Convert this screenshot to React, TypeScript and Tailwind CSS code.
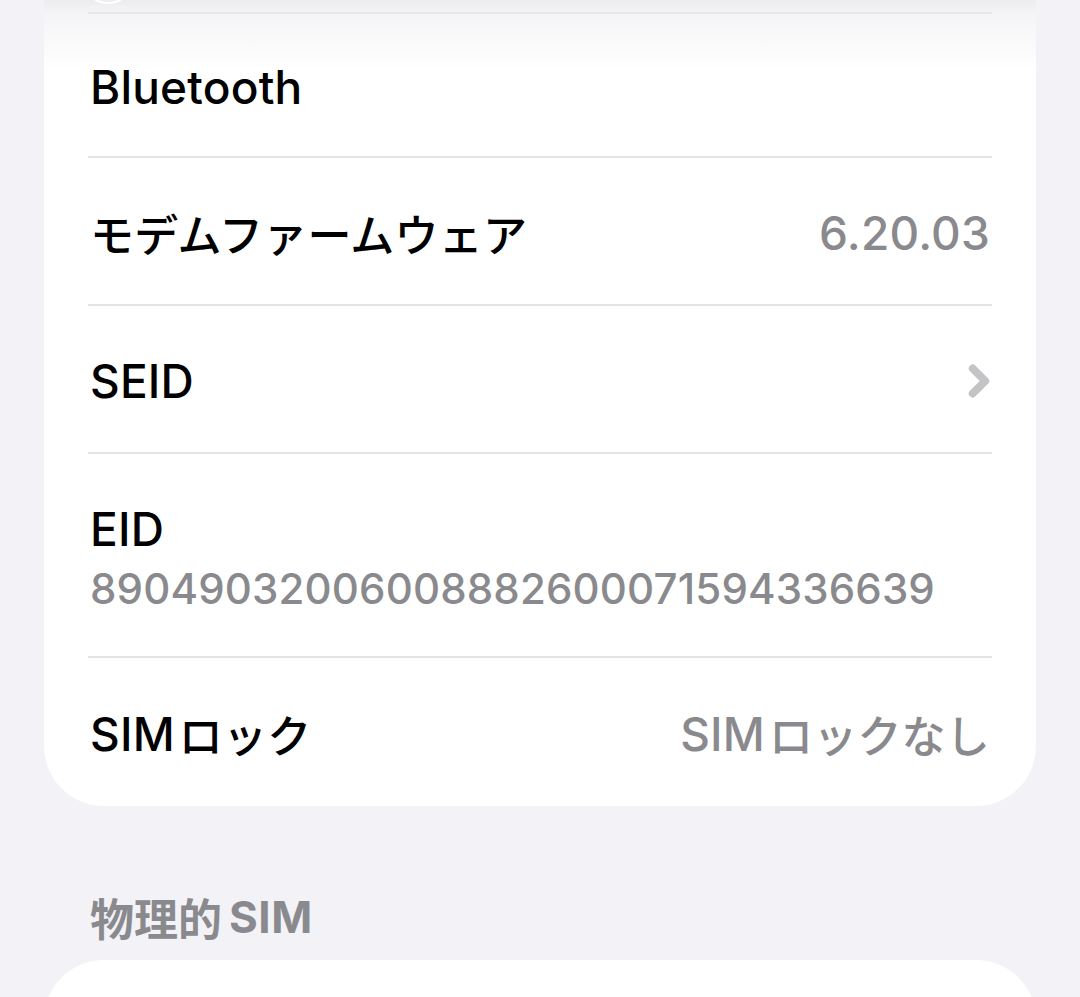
import { ChevronRight } from 'lucide-react'

const font = "font-['Inter','Noto_Sans_CJK_JP',sans-serif]"
const jp = "text-[44px] font-['Noto_Sans_CJK_JP',sans-serif]"

function Row({ label, value, chevron, last }: { label: React.ReactNode; value?: React.ReactNode; chevron?: boolean; last?: boolean }) {
    return (
        <div className="px-[44px]">
            <div className={`h-[148px] flex items-center justify-between pl-[2px] pr-[2px] pt-[4px] ${last ? '' : 'border-b-[2px] border-[#e3e3e6]'}`}>
                <span className="text-[46px] font-medium text-black tracking-[0.2px] flex items-center">{label}</span>
                {value && <span className="text-[46px] font-medium text-[#8a8a8e] tracking-[0.2px] flex items-center">{value}</span>}
                {chevron && <ChevronRight className="w-[50px] h-[50px] text-[#c4c4c7] -mr-[14px]" strokeWidth={3.8} />}
            </div>
        </div>
    )
}

export default function App() {
    return (
        <div className={`w-[1080px] h-[997px] overflow-hidden bg-[#f2f2f7] ${font}`}>
            <div className="mx-[44px] bg-white rounded-b-[60px] overflow-hidden">
                {/* bottom edge of the row above */}
                <div className="relative h-[12px] bg-gradient-to-b from-[#ececef] to-[#f4f4f6]">
                    <div className="absolute left-[38px] -top-[58px] w-[52px] h-[62px] rounded-full border-[2px] border-white" />
                </div>
                <div className="px-[44px] bg-gradient-to-b from-[#f4f4f6] to-white to-[40%]">
                    <div className="h-[146px] flex items-center pl-[2px] pt-[4px] border-t-[2px] border-[#e6e6e9] border-b-[2px] border-b-[#e3e3e6]">
                        <span className="text-[46px] font-medium text-black tracking-[0.2px]">Bluetooth</span>
                    </div>
                </div>
                <Row label={<span className={`${jp} font-medium`}>モデムファームウェア</span>} value="6.20.03" />
                <Row label="SEID" chevron />
                <div className="px-[44px]">
                    <div className="h-[204px] flex flex-col justify-center pl-[2px] pt-[12px] border-b-[2px] border-[#e3e3e6]">
                        <span className="text-[46px] font-medium text-black leading-[56px] tracking-[0.2px]">EID</span>
                        <span className="text-[42px] font-medium text-[#8a8a8e] leading-[64px] tracking-[0.15px]">89049032006008882600071594336639</span>
                    </div>
                </div>
                <Row
                    label={<>SIM<span className={`${jp} ml-[4px]`}>ロック</span></>}
                    value={<>SIM<span className={`${jp} ml-[4px]`}>ロックなし</span></>}
                    last
                />
            </div>
            <div className="px-[90px] pt-[78px] h-[154px] flex items-start">
                <span className={`${jp} font-bold text-[#8a8a8e]`}>物理的</span>
                <span className="text-[44px] font-bold text-[#8a8a8e] ml-[7px] tracking-[0.5px] leading-[66px]">SIM</span>
            </div>
            <div className="mx-[44px] h-[200px] bg-white rounded-t-[60px]" />
        </div>
    )
}
